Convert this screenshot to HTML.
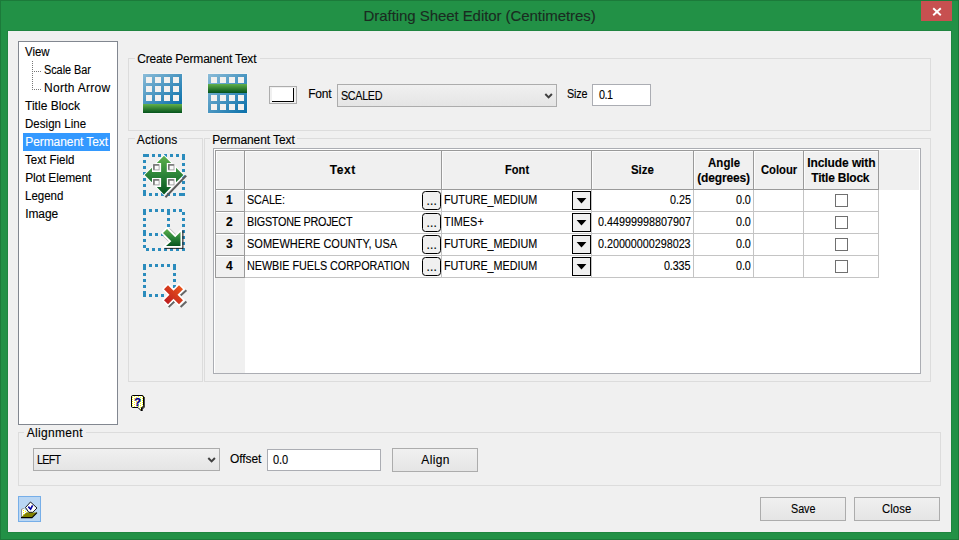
<!DOCTYPE html>
<html><head><meta charset="utf-8"><title>Drafting Sheet Editor (Centimetres)</title>
<style>
html,body{margin:0;padding:0}
body{width:959px;height:540px;overflow:hidden;background:#229146;font-family:"Liberation Sans",sans-serif;font-size:12px;color:#000;position:relative}
.a{position:absolute;box-sizing:border-box}
.t{position:absolute;white-space:nowrap;transform-origin:0 0;line-height:16px;height:16px;-webkit-text-stroke:0.12px currentColor}
.b{font-weight:bold}
.btn{position:absolute;box-sizing:border-box;border:1px solid #acacac;background:linear-gradient(#f0f0f0,#e5e5e5)}
.inp{position:absolute;box-sizing:border-box;border:1px solid #abadb3;background:#fff}
.grp{position:absolute;box-sizing:border-box;border:1px solid #dcdcdc}
.hl{position:absolute;height:1px}
.vl{position:absolute;width:1px}
svg{position:absolute;overflow:visible}
</style></head>
<body>
<div class="a" style="left:0px;top:0px;width:959px;height:540px;border:1px solid #1c7a3a;background:#229146"></div>
<div class="a" style="left:7px;top:30px;width:945px;height:503px;border:1px solid #1f8540;background:#f0f0f0"></div>
<div class="a" style="left:921px;top:1px;width:31px;height:20px;background:#c75050"></div>
<svg style="left:921px;top:1px" width="31" height="20"><path d="M12.2 7.2 L19.8 14.2 M19.8 7.2 L12.2 14.2" stroke="#fff" stroke-width="1.9" fill="none"/></svg>
<div class="a" style="left:18px;top:41px;width:100px;height:384px;border:1px solid #828790;background:#fff"></div>
<div class="a" style="left:23px;top:133px;width:87px;height:18px;background:#3399ff"></div>
<svg style="left:0;top:0" width="959" height="540"><path d="M32.5 61 V90 M34 71.5 H41 M34 89.5 H41" stroke="#777" stroke-width="1" stroke-dasharray="1 1" fill="none"/></svg>
<div class="grp" style="left:128px;top:58px;width:803px;height:73px;"></div>
<div class="grp" style="left:128px;top:138px;width:75px;height:244px;"></div>
<div class="grp" style="left:204px;top:138px;width:727px;height:244px;"></div>
<div class="grp" style="left:18px;top:432px;width:923px;height:54px;"></div>
<div class="a" style="left:135px;top:50px;width:125px;height:16px;background:#f0f0f0"></div>
<div class="a" style="left:135px;top:133px;width:44px;height:12px;background:#f0f0f0"></div>
<div class="a" style="left:210px;top:133px;width:87px;height:12px;background:#f0f0f0"></div>
<div class="a" style="left:24px;top:427px;width:62px;height:12px;background:#f0f0f0"></div>
<svg style="left:0;top:0" width="0" height="0"><defs>
<linearGradient id="bl" x1="0" y1="0" x2="1" y2="1"><stop offset="0" stop-color="#8bbcd8"/><stop offset="1" stop-color="#0a70aa"/></linearGradient>
<linearGradient id="gr" x1="0" y1="0" x2="0" y2="1"><stop offset="0" stop-color="#62b04a"/><stop offset="1" stop-color="#03521c"/></linearGradient>
<linearGradient id="ga" x1="0" y1="0" x2="0" y2="1"><stop offset="0" stop-color="#5fb04c"/><stop offset="0.5" stop-color="#2b8438"/><stop offset="1" stop-color="#06541f"/></linearGradient>
<linearGradient id="rd" x1="1" y1="0" x2="0" y2="1"><stop offset="0" stop-color="#ee5a1a"/><stop offset="1" stop-color="#b8161f"/></linearGradient>
<pattern id="dz" width="4" height="2" patternUnits="userSpaceOnUse"><rect width="4" height="2" fill="#fff"/><rect x="1" width="1" height="1" fill="#ff0"/><rect x="3" y="1" width="1" height="1" fill="#ff0"/></pattern>
</defs></svg>
<svg style="left:143px;top:74px" width="39" height="39"><rect x="-0.5" y="-0.5" width="40" height="40" fill="#f8f8f8"/><rect width="39" height="30" fill="url(#bl)"/><rect y="30" width="39" height="9" fill="url(#gr)"/><rect x="3" y="3" width="6" height="6" fill="#f3f1ef"/><rect x="12" y="3" width="6" height="6" fill="#f3f1ef"/><rect x="21" y="3" width="6" height="6" fill="#f3f1ef"/><rect x="30" y="3" width="6" height="6" fill="#f3f1ef"/><rect x="3" y="12" width="6" height="6" fill="#f3f1ef"/><rect x="12" y="12" width="6" height="6" fill="#f3f1ef"/><rect x="21" y="12" width="6" height="6" fill="#f3f1ef"/><rect x="30" y="12" width="6" height="6" fill="#f3f1ef"/><rect x="3" y="21" width="6" height="6" fill="#f3f1ef"/><rect x="12" y="21" width="6" height="6" fill="#f3f1ef"/><rect x="21" y="21" width="6" height="6" fill="#f3f1ef"/><rect x="30" y="21" width="6" height="6" fill="#f3f1ef"/></svg>
<svg style="left:208px;top:74px" width="39" height="39"><rect x="-0.5" y="-0.5" width="40" height="40" fill="#f8f8f8"/><rect width="39" height="39" fill="url(#bl)"/><rect y="10" width="39" height="9" fill="url(#gr)"/><rect x="3" y="3" width="6" height="6" fill="#f3f1ef"/><rect x="12" y="3" width="6" height="6" fill="#f3f1ef"/><rect x="21" y="3" width="6" height="6" fill="#f3f1ef"/><rect x="30" y="3" width="6" height="6" fill="#f3f1ef"/><rect x="3" y="21" width="6" height="6" fill="#f3f1ef"/><rect x="12" y="21" width="6" height="6" fill="#f3f1ef"/><rect x="21" y="21" width="6" height="6" fill="#f3f1ef"/><rect x="30" y="21" width="6" height="6" fill="#f3f1ef"/><rect x="3" y="30" width="6" height="6" fill="#f3f1ef"/><rect x="12" y="30" width="6" height="6" fill="#f3f1ef"/><rect x="21" y="30" width="6" height="6" fill="#f3f1ef"/><rect x="30" y="30" width="6" height="6" fill="#f3f1ef"/></svg>
<div class="a" style="left:269px;top:86px;width:28px;height:18px;border:1px solid #adadad;background:#f0f0f0"></div>
<div class="a" style="left:272px;top:88px;width:22px;height:14px;background:#fff;border-right:1px solid #000;border-bottom:1px solid #000"></div>
<div class="btn" style="left:337px;top:84px;width:220px;height:23px;"></div>
<svg style="left:0;top:0" width="959" height="540"><path d="M545.3000000000001 94.0 L548.6 97.4 L551.9 94.0" stroke="#404040" stroke-width="2" fill="none"/></svg>
<div class="btn" style="left:33px;top:448px;width:187px;height:23px;"></div>
<svg style="left:0;top:0" width="959" height="540"><path d="M208.29999999999998 458.0 L211.6 461.4 L214.9 458.0" stroke="#404040" stroke-width="2" fill="none"/></svg>
<div class="inp" style="left:592px;top:84px;width:59px;height:22px;"></div>
<div class="inp" style="left:267px;top:449px;width:114px;height:22px;"></div>
<div class="btn" style="left:392px;top:448px;width:86px;height:24px;"></div>
<div class="btn" style="left:760px;top:497px;width:86px;height:24px;"></div>
<div class="btn" style="left:854px;top:497px;width:86px;height:24px;"></div>
<svg style="left:143px;top:154px" width="46" height="46"><rect x="0" y="0" width="6" height="3" fill="#2b8cbd"/><rect x="9" y="0" width="3" height="3" fill="#2b8cbd"/><rect x="15" y="0" width="3" height="3" fill="#2b8cbd"/><rect x="21" y="0" width="3" height="3" fill="#2b8cbd"/><rect x="27" y="0" width="3" height="3" fill="#2b8cbd"/><rect x="33" y="0" width="3" height="3" fill="#2b8cbd"/><rect x="39" y="0" width="3" height="6" fill="#2b8cbd"/><rect x="39" y="9" width="3" height="3" fill="#2b8cbd"/><rect x="39" y="15" width="3" height="3" fill="#2b8cbd"/><rect x="39" y="21" width="3" height="3" fill="#2b8cbd"/><rect x="39" y="27" width="3" height="3" fill="#2b8cbd"/><rect x="39" y="33" width="3" height="3" fill="#2b8cbd"/><rect x="36" y="39" width="6" height="3" fill="#2b8cbd"/><rect x="30" y="39" width="3" height="3" fill="#2b8cbd"/><rect x="24" y="39" width="3" height="3" fill="#2b8cbd"/><rect x="18" y="39" width="3" height="3" fill="#2b8cbd"/><rect x="12" y="39" width="3" height="3" fill="#2b8cbd"/><rect x="6" y="39" width="3" height="3" fill="#2b8cbd"/><rect x="0" y="36" width="3" height="6" fill="#2b8cbd"/><rect x="0" y="30" width="3" height="3" fill="#2b8cbd"/><rect x="0" y="24" width="3" height="3" fill="#2b8cbd"/><rect x="0" y="18" width="3" height="3" fill="#2b8cbd"/><rect x="0" y="12" width="3" height="3" fill="#2b8cbd"/><rect x="0" y="6" width="3" height="3" fill="#2b8cbd"/><path d="M43.2 21.6 L22.4 43.2" stroke="#5a5a5a" stroke-width="2"/><path d="M21 0.5 L41.6 21 L21 41.6 L0.4 21 Z" fill="#fff"/><path d="M21 1.7 L28.2 8.9 H23.8 V18 H33 V13.8 L40.4 21 L33 28.2 V24 H23.8 V33 H28.2 L21 40.4 L13.8 33 H18.1 V24 H9 V28.2 L1.6 21 L9 13.8 V18 H18.1 V8.9 H13.8 Z" fill="url(#ga)"/><rect x="10.2" y="10.2" width="6.4" height="6.2" fill="#a8a8a8"/><rect x="10.2" y="10.2" width="5.7" height="5.5" fill="#6e6e6e"/><rect x="11.7" y="11.7" width="4.1000000000000005" height="3.9000000000000004" fill="#fbfbfb"/><rect x="25.1" y="10.2" width="6.4" height="6.2" fill="#a8a8a8"/><rect x="25.1" y="10.2" width="5.7" height="5.5" fill="#6e6e6e"/><rect x="26.6" y="11.7" width="4.1000000000000005" height="3.9000000000000004" fill="#fbfbfb"/><rect x="10.2" y="25.2" width="6.4" height="6.2" fill="#a8a8a8"/><rect x="10.2" y="25.2" width="5.7" height="5.5" fill="#6e6e6e"/><rect x="11.7" y="26.7" width="4.1000000000000005" height="3.9000000000000004" fill="#fbfbfb"/><rect x="25.1" y="25.2" width="6.4" height="6.2" fill="#a8a8a8"/><rect x="25.1" y="25.2" width="5.7" height="5.5" fill="#6e6e6e"/><rect x="26.6" y="26.7" width="4.1000000000000005" height="3.9000000000000004" fill="#fbfbfb"/></svg>
<svg style="left:143px;top:209px" width="46" height="46"><rect x="0" y="0" width="3" height="6" fill="#2b8cbd"/><rect x="6" y="0" width="3" height="3" fill="#2b8cbd"/><rect x="12" y="0" width="3" height="3" fill="#2b8cbd"/><rect x="18" y="0" width="3" height="3" fill="#2b8cbd"/><rect x="24" y="0" width="3" height="6" fill="#2b8cbd"/><rect x="30" y="0" width="3" height="3" fill="#2b8cbd"/><rect x="36" y="0" width="3" height="3" fill="#2b8cbd"/><rect x="39" y="3" width="3" height="3" fill="#2b8cbd"/><rect x="39" y="9" width="3" height="3" fill="#2b8cbd"/><rect x="39" y="15" width="3" height="3" fill="#2b8cbd"/><rect x="39" y="21" width="3" height="3" fill="#2b8cbd"/><rect x="39" y="27" width="3" height="3" fill="#2b8cbd"/><rect x="39" y="33" width="3" height="3" fill="#2b8cbd"/><rect x="39" y="39" width="3" height="3" fill="#2b8cbd"/><rect x="3" y="39" width="3" height="3" fill="#2b8cbd"/><rect x="9" y="39" width="3" height="3" fill="#2b8cbd"/><rect x="15" y="39" width="3" height="3" fill="#2b8cbd"/><rect x="21" y="39" width="3" height="3" fill="#2b8cbd"/><rect x="27" y="39" width="3" height="3" fill="#2b8cbd"/><rect x="33" y="39" width="3" height="3" fill="#2b8cbd"/><rect x="0" y="36" width="3" height="3" fill="#2b8cbd"/><rect x="0" y="30" width="3" height="3" fill="#2b8cbd"/><rect x="0" y="21" width="3" height="6" fill="#2b8cbd"/><rect x="0" y="15" width="3" height="3" fill="#2b8cbd"/><rect x="0" y="9" width="3" height="3" fill="#2b8cbd"/><rect x="24" y="9" width="3" height="3" fill="#2b8cbd"/><rect x="24" y="15" width="3" height="3" fill="#2b8cbd"/><rect x="6" y="24" width="3" height="3" fill="#2b8cbd"/><rect x="12" y="24" width="3" height="3" fill="#2b8cbd"/><rect x="18" y="24" width="3" height="3" fill="#2b8cbd"/><path d="M39.8 21.5 V39.4 H21.5" stroke="#151515" stroke-width="1.4" fill="none" opacity="0.8"/><path d="M26.6 19.4 L33.6 26.4 M19.8 26.6 L26.4 33.2" stroke="#777" stroke-width="0.8" fill="none" opacity="0.55"/><path d="M24 20 L32.2 28.2 L37.5 23 L37.5 37 L23 37 L28.3 32.2 L20 24 Z" fill="#fff" stroke="#fff" stroke-width="3.2" stroke-linejoin="miter"/><path d="M24 20 L32.2 28.2 L37.5 23 L37.5 37 L23 37 L28.3 32.2 L20 24 Z" fill="url(#ga)"/></svg>
<svg style="left:143px;top:264px" width="46" height="46"><rect x="0" y="0" width="3" height="6" fill="#2b8cbd"/><rect x="6" y="0" width="3" height="3" fill="#2b8cbd"/><rect x="12" y="0" width="3" height="3" fill="#2b8cbd"/><rect x="18" y="0" width="3" height="3" fill="#2b8cbd"/><rect x="24" y="0" width="3" height="3" fill="#2b8cbd"/><rect x="30" y="0" width="3" height="6" fill="#2b8cbd"/><rect x="30" y="9" width="3" height="3" fill="#2b8cbd"/><rect x="30" y="15" width="3" height="3" fill="#2b8cbd"/><rect x="30" y="21" width="3" height="3" fill="#2b8cbd"/><rect x="0" y="9" width="3" height="3" fill="#2b8cbd"/><rect x="0" y="15" width="3" height="3" fill="#2b8cbd"/><rect x="0" y="21" width="3" height="3" fill="#2b8cbd"/><rect x="0" y="27" width="3" height="6" fill="#2b8cbd"/><rect x="6" y="30" width="3" height="3" fill="#2b8cbd"/><rect x="12" y="30" width="3" height="3" fill="#2b8cbd"/><rect x="18" y="30" width="3" height="3" fill="#2b8cbd"/><path d="M43.4 26.2 L37.6 31.4 M43.4 37.6 L37.6 43 M31.4 37.6 L25.6 43" stroke="#666" stroke-width="2"/><g transform="translate(30.5 30.7)"><path d="M-9.5 -5.5 L-5.5 -9.5 L0 -4 L5.5 -9.5 L9.5 -5.5 L4 0 L9.5 5.5 L5.5 9.5 L0 4 L-5.5 9.5 L-9.5 5.5 L-4 0 Z" fill="#fff" stroke="#fff" stroke-width="3" stroke-linejoin="miter"/><path d="M-9.5 -5.5 L-5.5 -9.5 L0 -4 L5.5 -9.5 L9.5 -5.5 L4 0 L9.5 5.5 L5.5 9.5 L0 4 L-5.5 9.5 L-9.5 5.5 L-4 0 Z" fill="url(#rd)"/></g></svg>
<div class="a" style="left:213px;top:148px;width:708px;height:226px;border:1px solid #abadb3;background:#fff"></div>
<div class="a" style="left:215px;top:150px;width:704px;height:40px;background:#f0f0f0"></div>
<div class="a" style="left:215px;top:150px;width:30px;height:223px;background:#f0f0f0"></div>
<div class="hl" style="left:215px;top:150px;width:664px;background:#9a9a9a"></div>
<div class="hl" style="left:215px;top:189px;width:664px;background:#9a9a9a"></div>
<div class="vl" style="left:215px;top:150px;height:128px;background:#9a9a9a"></div>
<div class="vl" style="left:244px;top:150px;height:40px;background:#9a9a9a"></div>
<div class="vl" style="left:441px;top:150px;height:40px;background:#9a9a9a"></div>
<div class="vl" style="left:591px;top:150px;height:40px;background:#9a9a9a"></div>
<div class="vl" style="left:693px;top:150px;height:40px;background:#9a9a9a"></div>
<div class="vl" style="left:753px;top:150px;height:40px;background:#9a9a9a"></div>
<div class="vl" style="left:803px;top:150px;height:40px;background:#9a9a9a"></div>
<div class="vl" style="left:878px;top:150px;height:40px;background:#9a9a9a"></div>
<div class="vl" style="left:441px;top:190px;height:88px;background:#c4c4c4"></div>
<div class="vl" style="left:591px;top:190px;height:88px;background:#c4c4c4"></div>
<div class="vl" style="left:693px;top:190px;height:88px;background:#c4c4c4"></div>
<div class="vl" style="left:753px;top:190px;height:88px;background:#c4c4c4"></div>
<div class="vl" style="left:803px;top:190px;height:88px;background:#c4c4c4"></div>
<div class="vl" style="left:878px;top:190px;height:88px;background:#c4c4c4"></div>
<div class="vl" style="left:244px;top:190px;height:88px;background:#9a9a9a"></div>
<div class="hl" style="left:245px;top:211px;width:634px;background:#c4c4c4"></div>
<div class="hl" style="left:215px;top:211px;width:30px;background:#9a9a9a"></div>
<div class="hl" style="left:216px;top:212px;width:28px;background:#fff"></div>
<div class="hl" style="left:245px;top:233px;width:634px;background:#c4c4c4"></div>
<div class="hl" style="left:215px;top:233px;width:30px;background:#9a9a9a"></div>
<div class="hl" style="left:216px;top:234px;width:28px;background:#fff"></div>
<div class="hl" style="left:245px;top:255px;width:634px;background:#c4c4c4"></div>
<div class="hl" style="left:215px;top:255px;width:30px;background:#9a9a9a"></div>
<div class="hl" style="left:216px;top:256px;width:28px;background:#fff"></div>
<div class="hl" style="left:245px;top:277px;width:634px;background:#c4c4c4"></div>
<div class="hl" style="left:215px;top:277px;width:30px;background:#9a9a9a"></div>
<div class="hl" style="left:216px;top:190px;width:28px;background:#fff"></div>
<div class="hl" style="left:216px;top:151px;width:28px;background:#fbfbfb"></div>
<div class="vl" style="left:216px;top:151px;height:38px;background:#fbfbfb"></div>
<div class="hl" style="left:245px;top:151px;width:196px;background:#fbfbfb"></div>
<div class="vl" style="left:245px;top:151px;height:38px;background:#fbfbfb"></div>
<div class="hl" style="left:442px;top:151px;width:149px;background:#fbfbfb"></div>
<div class="vl" style="left:442px;top:151px;height:38px;background:#fbfbfb"></div>
<div class="hl" style="left:592px;top:151px;width:101px;background:#fbfbfb"></div>
<div class="vl" style="left:592px;top:151px;height:38px;background:#fbfbfb"></div>
<div class="hl" style="left:694px;top:151px;width:59px;background:#fbfbfb"></div>
<div class="vl" style="left:694px;top:151px;height:38px;background:#fbfbfb"></div>
<div class="hl" style="left:754px;top:151px;width:49px;background:#fbfbfb"></div>
<div class="vl" style="left:754px;top:151px;height:38px;background:#fbfbfb"></div>
<div class="hl" style="left:804px;top:151px;width:74px;background:#fbfbfb"></div>
<div class="vl" style="left:804px;top:151px;height:38px;background:#fbfbfb"></div>
<div class="a" style="left:422px;top:191px;width:19px;height:19px;border:1px solid #000;border-radius:3.5px;background:#f0f0f0"></div>
<div class="a" style="left:572px;top:191px;width:19px;height:19px;border:1px solid #000;background:#f0f0f0"></div>
<svg style="left:572px;top:191px" width="19" height="19"><path d="M4.6 7 H14.4 L9.5 12.4 Z" fill="#000"/></svg>
<div class="a" style="left:835px;top:194px;width:13px;height:13px;border:1px solid #707070;background:#fff"></div>
<div class="a" style="left:422px;top:213px;width:19px;height:19px;border:1px solid #000;border-radius:3.5px;background:#f0f0f0"></div>
<div class="a" style="left:572px;top:213px;width:19px;height:19px;border:1px solid #000;background:#f0f0f0"></div>
<svg style="left:572px;top:213px" width="19" height="19"><path d="M4.6 7 H14.4 L9.5 12.4 Z" fill="#000"/></svg>
<div class="a" style="left:835px;top:216px;width:13px;height:13px;border:1px solid #707070;background:#fff"></div>
<div class="a" style="left:422px;top:235px;width:19px;height:19px;border:1px solid #000;border-radius:3.5px;background:#f0f0f0"></div>
<div class="a" style="left:572px;top:235px;width:19px;height:19px;border:1px solid #000;background:#f0f0f0"></div>
<svg style="left:572px;top:235px" width="19" height="19"><path d="M4.6 7 H14.4 L9.5 12.4 Z" fill="#000"/></svg>
<div class="a" style="left:835px;top:238px;width:13px;height:13px;border:1px solid #707070;background:#fff"></div>
<div class="a" style="left:422px;top:257px;width:19px;height:19px;border:1px solid #000;border-radius:3.5px;background:#f0f0f0"></div>
<div class="a" style="left:572px;top:257px;width:19px;height:19px;border:1px solid #000;background:#f0f0f0"></div>
<svg style="left:572px;top:257px" width="19" height="19"><path d="M4.6 7 H14.4 L9.5 12.4 Z" fill="#000"/></svg>
<div class="a" style="left:835px;top:260px;width:13px;height:13px;border:1px solid #707070;background:#fff"></div>
<svg style="left:131px;top:395px" width="16" height="18"><path d="M2 1.5 H11.5 V12 H3 Z" fill="#000"/><path d="M1.5 0.5 H11 Q12.5 0.5 12.5 2 V10.5 Q12.5 12.5 11 12.5 H10.5 V16 L7 12.5 H1.5 Q0.5 12.5 0.5 11 V2 Q0.5 0.5 1.5 0.5 Z" fill="url(#dz)" stroke="#000" stroke-width="1"/><path d="M13.2 2 V12 Q13.2 13.2 12 13.2 H11.2 V16" stroke="#000" stroke-width="1" fill="none"/><text x="6.5" y="10.6" font-family="Liberation Sans, sans-serif" font-weight="bold" font-size="11" text-anchor="middle" fill="#00008a" stroke="#00008a" stroke-width="0.35">?</text></svg>
<div class="a" style="left:18px;top:496px;width:23px;height:26px;border:1px solid #76aee8;background:#b9d6f3"></div>
<svg style="left:18px;top:496px" width="23" height="26"><path d="M3.4 13.2 L5.6 12.4 L10.8 16.4 L8.3 16.8 L3.4 21 Z" fill="url(#dz)"/><path d="M3.5 21 V13.3 L5.6 12.5" stroke="#8a8a8a" stroke-width="0.9" fill="none"/><path d="M8.4 16.6 H19 L14 21.2 H3.2 Z" fill="#808000"/><path d="M3 21.6 H14 L19 16.6" stroke="#000" stroke-width="1.1" fill="none"/><path d="M12.5 6 L19 12 L14.8 16.3 H10.8 L7.5 11.5 Z" fill="#fff" stroke="#000" stroke-width="0.9"/><path d="M10.3 10.6 L12.6 13.2 L14.6 9.4" stroke="#0000a0" stroke-width="1.6" fill="none"/></svg>
<div class="t" id="t0" style="left:363.58px;top:5.50px;font-size:15px;line-height:20px;height:20px;color:#1a2b21;letter-spacing:-0.064px;">Drafting Sheet Editor (Centimetres)</div>
<div class="t" id="t1" style="left:25.13px;top:43.84px;letter-spacing:-0.016px;transform:scaleX(0.9536);">View</div>
<div class="t" id="t2" style="left:43.95px;top:61.84px;letter-spacing:-0.077px;transform:scaleX(0.9110);">Scale Bar</div>
<div class="t" id="t3" style="left:44.03px;top:79.84px;letter-spacing:0.271px;">North Arrow</div>
<div class="t" id="t4" style="left:25.02px;top:97.84px;letter-spacing:0.016px;">Title Block</div>
<div class="t" id="t5" style="left:25.18px;top:115.84px;letter-spacing:0.042px;transform:scaleX(0.9578);">Design Line</div>
<div class="t" id="t6" style="left:25.23px;top:133.84px;color:#fff;letter-spacing:-0.070px;">Permanent Text</div>
<div class="t" id="t7" style="left:25.12px;top:151.84px;letter-spacing:0.007px;transform:scaleX(0.9614);">Text Field</div>
<div class="t" id="t8" style="left:25.23px;top:169.84px;letter-spacing:-0.179px;">Plot Element</div>
<div class="t" id="t9" style="left:25.28px;top:187.84px;letter-spacing:-0.031px;transform:scaleX(0.9605);">Legend</div>
<div class="t" id="t10" style="left:25.14px;top:205.84px;letter-spacing:-0.068px;">Image</div>
<div class="t" id="t11" style="left:137.34px;top:50.84px;letter-spacing:-0.201px;">Create Permanent Text</div>
<div class="t" id="t12" style="left:136.72px;top:131.64px;letter-spacing:0.199px;">Actions</div>
<div class="t" id="t13" style="left:212.13px;top:131.64px;letter-spacing:-0.089px;">Permanent Text</div>
<div class="t" id="t14" style="left:26.72px;top:424.84px;letter-spacing:0.320px;">Alignment</div>
<div class="t" id="t15" style="left:308.23px;top:85.84px;letter-spacing:-0.234px;">Font</div>
<div class="t" id="t16" style="left:340.95px;top:87.64px;letter-spacing:-0.393px;transform:scaleX(0.9000);">SCALED</div>
<div class="t" id="t17" style="left:567.05px;top:85.84px;letter-spacing:-0.200px;transform:scaleX(0.9000);">Size</div>
<div class="t" id="t18" style="left:598.65px;top:86.84px;letter-spacing:-0.575px;transform:scaleX(0.9000);">0.1</div>
<div class="t" id="t19" style="left:36.81px;top:451.84px;letter-spacing:-0.818px;transform:scaleX(0.9000);">LEFT</div>
<div class="t" id="t20" style="left:230.08px;top:451.24px;letter-spacing:-0.111px;">Offset</div>
<div class="t" id="t21" style="left:273.14px;top:451.84px;letter-spacing:-0.076px;transform:scaleX(0.9197);">0.0</div>
<div class="t" id="t22" style="left:421.22px;top:451.84px;letter-spacing:0.408px;">Align</div>
<div class="t" id="t23" style="left:790.95px;top:501.04px;letter-spacing:-0.071px;transform:scaleX(0.9000);">Save</div>
<div class="t" id="t24" style="left:882.17px;top:501.04px;letter-spacing:0.054px;transform:scaleX(0.9459);">Close</div>
<div class="t b" id="t25" style="left:329.70px;top:161.84px;letter-spacing:0.606px;">Text</div>
<div class="t b" id="t26" style="left:504.57px;top:161.84px;letter-spacing:0.049px;transform:scaleX(0.9226);">Font</div>
<div class="t b" id="t27" style="left:630.94px;top:161.84px;letter-spacing:-0.039px;transform:scaleX(0.9560);">Size</div>
<div class="t b" id="t28" style="left:708.07px;top:154.84px;letter-spacing:0.099px;transform:scaleX(0.9507);">Angle</div>
<div class="t b" id="t29" style="left:697.17px;top:169.84px;letter-spacing:-0.150px;">(degrees)</div>
<div class="t b" id="t30" style="left:760.76px;top:161.84px;letter-spacing:-0.030px;transform:scaleX(0.9382);">Colour</div>
<div class="t b" id="t31" style="left:807.31px;top:154.84px;letter-spacing:-0.094px;">Include with</div>
<div class="t b" id="t32" style="left:811.30px;top:169.84px;letter-spacing:-0.226px;">Title Block</div>
<div class="t b" id="t33" style="left:226.01px;top:192.34px;">1</div>
<div class="t" id="t34" style="left:246.55px;top:192.34px;letter-spacing:-0.118px;transform:scaleX(0.9000);">SCALE:</div>
<div class="t" id="t35" style="left:444.41px;top:192.34px;letter-spacing:-0.032px;transform:scaleX(0.9000);">FUTURE_MEDIUM</div>
<div class="t" id="t36" style="left:670.15px;top:192.34px;letter-spacing:-0.045px;transform:scaleX(0.9000);">0.25</div>
<div class="t" id="t37" style="left:735.95px;top:192.34px;letter-spacing:-0.088px;transform:scaleX(0.9000);">0.0</div>
<div class="t" id="t38" style="left:426.40px;top:192.84px;letter-spacing:0.226px;">...</div>
<div class="t b" id="t39" style="left:226.05px;top:214.34px;">2</div>
<div class="t" id="t40" style="left:246.71px;top:214.34px;letter-spacing:-0.261px;transform:scaleX(0.9000);">BIGSTONE PROJECT</div>
<div class="t" id="t41" style="left:444.22px;top:214.34px;letter-spacing:0.063px;transform:scaleX(0.9033);">TIMES+</div>
<div class="t" id="t42" style="left:598.35px;top:214.34px;letter-spacing:-0.016px;transform:scaleX(0.9018);">0.44999998807907</div>
<div class="t" id="t43" style="left:735.95px;top:214.34px;letter-spacing:-0.088px;transform:scaleX(0.9000);">0.0</div>
<div class="t" id="t44" style="left:426.40px;top:214.84px;letter-spacing:0.226px;">...</div>
<div class="t b" id="t45" style="left:226.02px;top:236.34px;">3</div>
<div class="t" id="t46" style="left:246.55px;top:236.34px;transform:scaleX(0.9167);">SOMEWHERE COUNTY, USA</div>
<div class="t" id="t47" style="left:444.41px;top:236.34px;letter-spacing:-0.032px;transform:scaleX(0.9000);">FUTURE_MEDIUM</div>
<div class="t" id="t48" style="left:598.35px;top:236.34px;letter-spacing:-0.035px;transform:scaleX(0.9000);">0.20000000298023</div>
<div class="t" id="t49" style="left:735.95px;top:236.34px;letter-spacing:-0.088px;transform:scaleX(0.9000);">0.0</div>
<div class="t" id="t50" style="left:426.40px;top:236.84px;letter-spacing:0.226px;">...</div>
<div class="t b" id="t51" style="left:226.05px;top:258.34px;">4</div>
<div class="t" id="t52" style="left:246.71px;top:258.34px;letter-spacing:-0.028px;transform:scaleX(0.9000);">NEWBIE FUELS CORPORATION</div>
<div class="t" id="t53" style="left:444.41px;top:258.34px;letter-spacing:-0.032px;transform:scaleX(0.9000);">FUTURE_MEDIUM</div>
<div class="t" id="t54" style="left:664.45px;top:258.34px;letter-spacing:-0.159px;transform:scaleX(0.9000);">0.335</div>
<div class="t" id="t55" style="left:735.95px;top:258.34px;letter-spacing:-0.088px;transform:scaleX(0.9000);">0.0</div>
<div class="t" id="t56" style="left:426.40px;top:258.84px;letter-spacing:0.226px;">...</div>
</body></html>
